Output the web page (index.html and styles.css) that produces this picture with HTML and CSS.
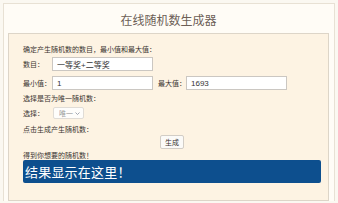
FILE: index.html
```html
<!DOCTYPE html>
<html lang="zh-CN">
<head>
  <meta charset="UTF-8">
  <title>在线随机数生成器</title>
  <link rel="stylesheet" href="styles.css">
</head>
<body>
  <div class="page">
    <h1 class="title">在线随机数生成器</h1>

    <div class="panel">
      <p class="hint">确定产生随机数的数目，最小值和最大值：</p>

      <div class="row row-gap">
        <label class="lbl" for="count">数目：</label>
        <input type="text" id="count" class="field" value="一等奖+二等奖">
      </div>

      <div class="row row-gap2">
        <label class="lbl" for="min">最小值：</label>
        <input type="text" id="min" class="field" value="1">
        <label class="lbl lbl-max" for="max">最大值：</label>
        <input type="text" id="max" class="field" value="1693">
      </div>

      <p class="hint">选择是否为唯一随机数：</p>

      <div class="row row-select">
        <label class="lbl" for="unique">选择：</label>
        <span class="select-wrap">
          <select id="unique" class="select">
            <option>唯一</option>
            <option>不唯一</option>
          </select>
          <svg class="chev" width="5" height="3" viewBox="0 0 5 3"><path d="M0.5 0.5 L2.5 2.5 L4.5 0.5" fill="none" stroke="#8a8fa0" stroke-width="0.8"/></svg>
        </span>
      </div>

      <p class="hint hint-tight">点击生成产生随机数：</p>

      <div class="btn-row">
        <button type="button" class="gen-btn">生成</button>
      </div>

      <p class="hint hint-last">得到你想要的随机数！</p>

      <div class="result">结果显示在这里！</div>
    </div>
  </div>
</body>
</html>
```

FILE: styles.css
```css
* {
  box-sizing: border-box;
}

body {
  margin: 0;
  background: #fbf8f1;
  font-family: "Noto Sans CJK SC", "Noto Sans", sans-serif;
  color: #333;
}

.page {
  margin: 3px 3px 0 3px;
  border: 1px solid #e8e1d4;
  border-bottom: none;
  background: #fffcf6;
  padding: 0 5px 0 4px;
}

.title {
  margin: 0;
  height: 29px;
  padding-top: 1px;
  line-height: 29px;
  text-align: center;
  font-size: 12px;
  font-weight: normal;
  color: #6d5f56;
}

.panel {
  border: 1px solid #ddd5c8;
  background: #fdf3e3;
  padding: 10px 7px 17px 14px;
}

.hint {
  margin: 0 0 3px 0;
  height: 10px;
  line-height: 10px;
  font-size: 7px;
  color: #3a3330;
}

.hint-tight {
  margin-bottom: 1px;
}

.hint-last {
  margin: 1px 0 0 0;
}

.row {
  display: flex;
  align-items: center;
  height: 14px;
}

.row-gap {
  margin-bottom: 5px;
}

.row-gap2 {
  margin-bottom: 3px;
}

.row-select {
  height: 12px;
  margin-top: 4px;
  margin-bottom: 5px;
}

.lbl {
  width: 29px;
  font-size: 7px;
  color: #3a3330;
}

.lbl-max {
  margin-left: 5px;
  width: 28px;
}

.field {
  width: 101px;
  height: 14px;
  padding: 0 4px;
  border: 1px solid #cbc7c2;
  background: #fff;
  font-family: "Liberation Sans", "Noto Sans CJK SC", sans-serif;
  font-size: 8px;
  color: #333;
  outline: none;
}

.select-wrap {
  position: relative;
  display: flex;
  align-items: center;
  height: 12px;
  margin-left: 1px;
}

.select {
  appearance: none;
  -webkit-appearance: none;
  width: 31px;
  height: 12px;
  padding: 0 0 0 5px;
  border: 1px solid #e0dcd6;
  border-radius: 2px;
  background: #fefdfb;
  font-family: "Noto Sans CJK SC", sans-serif;
  font-size: 7px;
  color: #999;
  line-height: 10px;
}

.chev {
  position: absolute;
  right: 4px;
  top: 5px;
}

.btn-row {
  display: flex;
  justify-content: center;
  height: 14px;
}

.gen-btn {
  height: 14px;
  width: 24px;
  padding: 0;
  border: 1px solid #d2cdc6;
  border-radius: 2px;
  background: #fbfaf8;
  font-family: "Noto Sans CJK SC", sans-serif;
  font-size: 7px;
  color: #3a3330;
  cursor: pointer;
}

.result {
  height: 23px;
  line-height: 23px;
  padding-left: 2px;
  background: #0d4f8e;
  border-radius: 2px;
  color: #fff;
  font-size: 13px;
  letter-spacing: 0.2px;
}
```
